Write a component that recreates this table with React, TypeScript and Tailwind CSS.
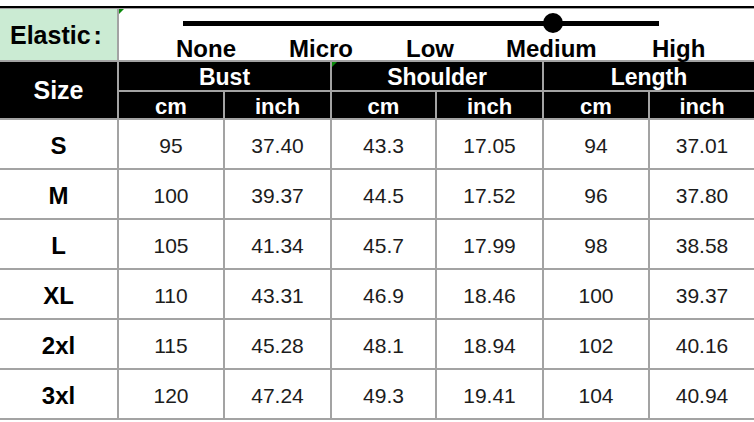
const rows = [
  { size: "S", v: ["95", "37.40", "43.3", "17.05", "94", "37.01"] },
  { size: "M", v: ["100", "39.37", "44.5", "17.52", "96", "37.80"] },
  { size: "L", v: ["105", "41.34", "45.7", "17.99", "98", "38.58"] },
  { size: "XL", v: ["110", "43.31", "46.9", "18.46", "100", "39.37"] },
  { size: "2xl", v: ["115", "45.28", "48.1", "18.94", "102", "40.16"] },
  { size: "3xl", v: ["120", "47.24", "49.3", "19.41", "104", "40.94"] },
];

const levels = [
  { label: "None", left: "left-[57px]" },
  { label: "Micro", left: "left-[170px]" },
  { label: "Low", left: "left-[287px]" },
  { label: "Medium", left: "left-[387px]" },
  { label: "High", left: "left-[533px]" },
];

const cols = "grid grid-cols-[117px_104px_105px_103px_105px_104px_104px] gap-x-[2px]";

// little green comment marker like in the excel sheet
const Marker = () => (
  <svg className="absolute left-0 top-0" width="5" height="5" viewBox="0 0 5 5">
    <polygon points="0,0 5,0 0,5" fill="#0a8a0a" />
  </svg>
);

const App = () => {
  return (
    <div
      className="w-[754px] h-[422px] bg-white pt-[6px] overflow-hidden"
      style={{ fontFamily: '"Liberation Sans", Arial, sans-serif' }}
    >
      <div className="h-[2px] bg-black" />
      <div className="bg-[#a3a3a3] pt-px pb-[2px] flex flex-col gap-y-[2px]">
        {/* elastic row */}
        <div className="grid grid-cols-[117px_1fr] gap-x-[2px] h-[51px]">
          <div className="bg-[#cbebd3] flex items-center pl-[10px] pt-[3px] text-[25px] font-bold text-black">
            Elastic<span className="ml-[3px]">:</span>
          </div>
          <div className="bg-white relative">
            <Marker />
            <svg className="absolute left-0 top-0" width="635" height="30">
              <rect x="64" y="12" width="476" height="5" fill="#000" />
              <circle cx="434" cy="14" r="10" fill="#000" />
            </svg>
            {levels.map((l) => (
              <span
                key={l.label}
                className={`absolute top-[28px] ${l.left} text-[24px] leading-[24px] font-bold text-black`}
              >
                {l.label}
              </span>
            ))}
          </div>
        </div>

        {/* header */}
        <div className={`${cols} grid-rows-[28px_26px] gap-y-[2px] text-white font-bold`}>
          <div className="row-span-2 bg-black flex items-center justify-center text-[25px] pt-[2px]">Size</div>
          <div className="col-span-2 bg-black flex items-center justify-center text-[23px] pt-[2px]">Bust</div>
          <div className="col-span-2 bg-black flex items-center justify-center text-[23px] pt-[2px] relative">
            <Marker />
            Shoulder
          </div>
          <div className="col-span-2 bg-black flex items-center justify-center text-[23px] pt-[2px]">Length</div>
          {["cm", "inch", "cm", "inch", "cm", "inch"].map((u, i) => (
            <div key={i} className="bg-black flex items-center justify-center text-[22px] pt-[3px]">
              {u}
            </div>
          ))}
        </div>

        {/* body */}
        {rows.map((r) => (
          <div key={r.size} className={`${cols} h-[48px]`}>
            <div className="bg-white flex items-center justify-center text-[24px] font-bold text-black pt-[3px]">
              {r.size}
            </div>
            {r.v.map((n, i) => (
              <div key={i} className="bg-white flex items-center justify-center text-[21px] text-[#1c1c1c] pt-[3px]">
                {n}
              </div>
            ))}
          </div>
        ))}
      </div>
    </div>
  );
};

export default App;
